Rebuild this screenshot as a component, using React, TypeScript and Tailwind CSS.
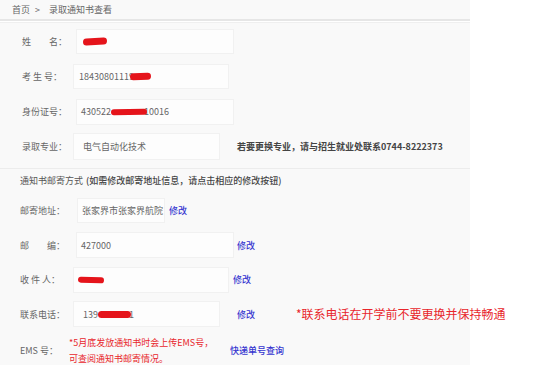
import React from "react";

const Blob = ({ cls }: { cls: string }) => (
  <span className={"inline-block rounded-full bg-[#e5141b] align-middle " + cls} />
);

type RowProps = {
  label: React.ReactNode;
  labelCls: string;
  boxCls: string;
  children?: React.ReactNode;
  after?: React.ReactNode;
  rowCls?: string;
};

const Row = ({ label, labelCls, boxCls, children, after, rowCls }: RowProps) => (
  <div className={"flex items-center whitespace-nowrap " + (rowCls ?? "h-[35px]")}>
    <span className={"shrink-0 text-[9px] text-[#666] " + labelCls}>{label}</span>
    <div className={"flex items-center shrink-0 bg-[#fdfdfd] border border-[#f1f1f1] text-[9px] text-[#666] " + boxCls}>
      {children}
    </div>
    {after}
  </div>
);

const Link = ({ cls, children }: { cls: string; children: React.ReactNode }) => (
  <span className={"shrink-0 text-[9px] font-medium text-[#3636d0] " + cls}>{children}</span>
);

export default function App() {
  return (
    <div
      className="w-[553px] h-[380px] bg-white overflow-hidden"
      style={{ fontFamily: '"Noto Sans CJK SC", "Noto Sans", sans-serif' }}
    >
      <div className="w-[470px] h-[365px] bg-[#f9f9f9]">
        <div className="h-[19px] flex items-center pl-[12px] text-[9px] text-[#666]">
          <span>首页</span>
          <span className="ml-[5px]">&gt;</span>
          <span className="ml-[9px]">录取通知书查看</span>
        </div>
        <div className="h-[2px] bg-[#e6e6e6]" />
        <div className="h-[1px] bg-white" />
        <div className="h-[1px] bg-[#efefef]" />
        <div className="pt-[1px] pl-[22px]">
          <Row label={<>姓<span className="ml-[18px]">名：</span></>} labelCls="w-[54px]" boxCls="w-[158px] h-[25px] pl-[6px]">
            <Blob cls="w-[24px] h-[7px] -rotate-3" />
          </Row>
          <Row label={<>考 生 号：</>} labelCls="w-[51px]" boxCls="w-[156px] h-[25px] pl-[5px]">
            <span>18430801119</span>
            <Blob cls="w-[21px] h-[7px] -ml-[4px] -rotate-3" />
          </Row>
          <Row label="身份证号：" labelCls="w-[54px]" boxCls="w-[158px] h-[26px] pl-[4px]">
            <span>430522</span>
            <Blob cls="w-[36px] h-[6px] -rotate-1" />
            <span className="-ml-[3px]">10016</span>
          </Row>
          <Row
            label="录取专业："
            labelCls="w-[51px]"
            boxCls="w-[147px] h-[27px] pl-[9px]"
            after={<span className="shrink-0 ml-[17px] text-[9px] font-bold text-[#444]">若要更换专业，请与招生就业处联系0744-8222373</span>}
          >
            电气自动化技术
          </Row>
        </div>
        <div className="mt-[4px] h-[1px] bg-[#ececec]" />
        <div className="h-[24px] flex items-center pl-[20px] text-[9px] text-[#555] whitespace-nowrap">
          通知书邮寄方式 <span className="ml-[3px] text-[#444] font-medium">(如需修改邮寄地址信息，请点击相应的修改按钮)</span>
        </div>
        <div className="pl-[20px]">
          <Row
            label="邮寄地址："
            labelCls="w-[57px]"
            boxCls="w-[88px] h-[25px] pl-[4px]"
            after={<Link cls="ml-[4px]">修改</Link>}
          >
            张家界市张家界航院
          </Row>
          <Row
            label={<>邮<span className="ml-[18px]">编：</span></>}
            labelCls="w-[56px]"
            boxCls="w-[158px] h-[26px] pl-[4px]"
            after={<Link cls="ml-[3px]">修改</Link>}
            rowCls="h-[34.5px]"
          >
            427000
          </Row>
          <Row
            label="收 件 人："
            labelCls="w-[53px]"
            boxCls="w-[156px] h-[26px] pl-[4px]"
            after={<Link cls="ml-[4px]">修改</Link>}
            rowCls="h-[34.5px]"
          >
            <Blob cls="w-[26px] h-[6px] rotate-2" />
          </Row>
          <Row
            label="联系电话："
            labelCls="w-[53px]"
            boxCls="w-[147px] h-[26px] pl-[9px]"
            rowCls="h-[34.5px]"
            after={
              <>
                <Link cls="ml-[17px]">修改</Link>
                <span className="shrink-0 ml-[41px] text-[12px] text-[#e8262c]">*联系电话在开学前不要更换并保持畅通</span>
              </>
            }
          >
            <span>139</span>
            <Blob cls="w-[33px] h-[7px]" />
            <span className="-ml-[2px]">1</span>
          </Row>
          <Row
            label="EMS 号："
            labelCls="w-[45px]"
            boxCls="w-[163px] h-[32px] pl-[3px] !bg-transparent !border-transparent"
            rowCls="h-[39px]"
            after={<Link cls="ml-[2px]">快递单号查询</Link>}
          >
            <div className="text-[9px] leading-[16px] text-[#e8262c]">
              <div>*5月底发放通知书时会上传EMS号，</div>
              <div>可查阅通知书邮寄情况。</div>
            </div>
          </Row>
        </div>
      </div>
    </div>
  );
}
